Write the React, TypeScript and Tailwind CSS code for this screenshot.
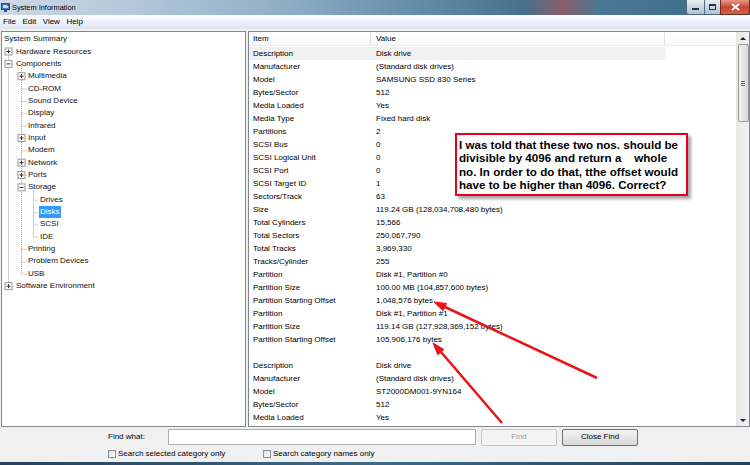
import React from "react";

const tree: { label: string; level: number; selected?: boolean }[] = [
  { label: "System Summary", level: 0 },
  { label: "Hardware Resources", level: 1 },
  { label: "Components", level: 1 },
  { label: "Multimedia", level: 2 },
  { label: "CD-ROM", level: 2 },
  { label: "Sound Device", level: 2 },
  { label: "Display", level: 2 },
  { label: "Infrared", level: 2 },
  { label: "Input", level: 2 },
  { label: "Modem", level: 2 },
  { label: "Network", level: 2 },
  { label: "Ports", level: 2 },
  { label: "Storage", level: 2 },
  { label: "Drives", level: 3 },
  { label: "Disks", level: 3, selected: true },
  { label: "SCSI", level: 3 },
  { label: "IDE", level: 3 },
  { label: "Printing", level: 2 },
  { label: "Problem Devices", level: 2 },
  { label: "USB", level: 2 },
  { label: "Software Environment", level: 1 },
];

const indent = ["pl-[2px]", "pl-[14px]", "pl-[26px]", "pl-[37px]"];

const rows: [string, string][] = [
  ["Description", "Disk drive"],
  ["Manufacturer", "(Standard disk drives)"],
  ["Model", "SAMSUNG SSD 830 Series"],
  ["Bytes/Sector", "512"],
  ["Media Loaded", "Yes"],
  ["Media Type", "Fixed hard disk"],
  ["Partitions", "2"],
  ["SCSI Bus", "0"],
  ["SCSI Logical Unit", "0"],
  ["SCSI Port", "0"],
  ["SCSI Target ID", "1"],
  ["Sectors/Track", "63"],
  ["Size", "119.24 GB (128,034,708,480 bytes)"],
  ["Total Cylinders", "15,566"],
  ["Total Sectors", "250,067,790"],
  ["Total Tracks", "3,969,330"],
  ["Tracks/Cylinder", "255"],
  ["Partition", "Disk #1, Partition #0"],
  ["Partition Size", "100.00 MB (104,857,600 bytes)"],
  ["Partition Starting Offset", "1,048,576 bytes"],
  ["Partition", "Disk #1, Partition #1"],
  ["Partition Size", "119.14 GB (127,928,369,152 bytes)"],
  ["Partition Starting Offset", "105,906,176 bytes"],
  ["", ""],
  ["Description", "Disk drive"],
  ["Manufacturer", "(Standard disk drives)"],
  ["Model", "ST2000DM001-9YN164"],
  ["Bytes/Sector", "512"],
  ["Media Loaded", "Yes"],
];

// row centre in page coords
const cy = (i: number) => 39.175 + 12.35 * i;

function Expander({ x, i, open }: { x: number; i: number; open?: boolean }) {
  const y = cy(i);
  return (
    <g>
      <rect x={x - 3.5} y={y - 3.5} width={7} height={7} fill="#fbfbfb" stroke="#9a9a9a" strokeWidth={1} />
      <line x1={x - 2} y1={y} x2={x + 2} y2={y} stroke="#333" strokeWidth={1} />
      {!open && <line x1={x} y1={y - 2} x2={x} y2={y + 2} stroke="#333" strokeWidth={1} />}
    </g>
  );
}

function TreeLines() {
  const dot = { stroke: "#a0a0a0", strokeWidth: 1, strokeDasharray: "1 1" };
  const l2 = [3, 4, 5, 6, 7, 8, 9, 10, 11, 12, 17, 18, 19];
  const l3 = [13, 14, 15, 16];
  return (
    <svg className="pointer-events-none absolute left-0 top-0" width={244} height={394}>
      <g transform="translate(-2,-32)">
        <line x1={8.5} y1={cy(1)} x2={8.5} y2={cy(20)} {...dot} />
        {[1, 2, 20].map((i) => (
          <line key={i} x1={8.5} y1={cy(i) + 0.5} x2={14} y2={cy(i) + 0.5} {...dot} />
        ))}
        <line x1={21.5} y1={cy(2)} x2={21.5} y2={cy(19)} {...dot} />
        {l2.map((i) => (
          <line key={i} x1={21.5} y1={cy(i) + 0.5} x2={27} y2={cy(i) + 0.5} {...dot} />
        ))}
        <line x1={33.5} y1={cy(12)} x2={33.5} y2={cy(16)} {...dot} />
        {l3.map((i) => (
          <line key={i} x1={33.5} y1={cy(i) + 0.5} x2={38} y2={cy(i) + 0.5} {...dot} />
        ))}
        <Expander x={8.5} i={1} />
        <Expander x={8.5} i={2} open />
        <Expander x={8.5} i={20} />
        <Expander x={21.5} i={3} />
        <Expander x={21.5} i={8} />
        <Expander x={21.5} i={10} />
        <Expander x={21.5} i={11} />
        <Expander x={21.5} i={12} open />
      </g>
    </svg>
  );
}

function Checkbox() {
  return <span className="mr-[2px] inline-block h-[8px] w-[8px] border border-[#8e8f8f] bg-gradient-to-br from-[#dcdcdc] to-white" />;
}

export default function App() {
  return (
    <div className="relative flex h-[465px] w-[750px] flex-col overflow-hidden bg-[#f0f0f0] font-['Liberation_Sans',Arial,sans-serif] text-[8px] leading-none text-black">
      {/* title bar */}
      <div className="relative flex h-[15px] shrink-0 items-center bg-[linear-gradient(90deg,#cdd9e6_0%,#b3c7da_18%,#8eaec6_38%,#5f88a4_58%,#46708d_70%,#8a5e6a_75%,#4b7894_80%,#3a6a86_100%)]">
        <svg width="9" height="9" viewBox="0 0 9 9" className="ml-[1px]">
          <rect x="0.5" y="0.5" width="8" height="6" fill="#3a7fd0" stroke="#1c4f8f" strokeWidth="1" />
          <rect x="2" y="2" width="5" height="3" fill="#bfe0ff" />
          <rect x="3" y="7" width="3" height="2" fill="#555" />
          <rect x="6" y="1" width="2" height="2" fill="#d33" />
        </svg>
        <span className="ml-[2px] text-[7.4px] text-black">System Information</span>
        <div className="ml-auto flex h-[15px] self-start">
          <div className="flex w-[19px] items-center justify-center rounded-bl-[3px] border border-t-0 border-[#50697f] bg-gradient-to-b from-[#e6eef5] to-[#aec3d6]">
            <span className="mt-[3px] h-[2px] w-[7px] bg-[#333]" />
          </div>
          <div className="flex w-[15px] items-center justify-center border-b border-[#50697f] bg-gradient-to-b from-[#e6eef5] to-[#aec3d6]">
            <span className="h-[6px] w-[7px] border border-t-2 border-[#333]" />
          </div>
          <div className="flex w-[30px] items-center justify-center rounded-br-[3px] border border-t-0 border-[#6b2a20] bg-gradient-to-b from-[#e59a8a] via-[#c8452f] to-[#d0634c]">
            <svg width="9" height="8" viewBox="0 0 9 8">
              <path d="M1 1 L8 7 M8 1 L1 7" stroke="#fff" strokeWidth="2" />
            </svg>
          </div>
        </div>
      </div>

      {/* menu bar */}
      <div className="flex h-[14px] shrink-0 items-center gap-[6.5px] bg-gradient-to-b from-[#fbfcfe] to-[#dde5f1] pl-[3px]">
        <span>File</span>
        <span>Edit</span>
        <span>View</span>
        <span>Help</span>
      </div>

      {/* panels */}
      <div className="flex h-[398px] shrink-0 gap-[2px] pl-[1px] pt-[2px]">
        <div className="relative h-[396px] w-[245px] border border-[#828790] bg-white">
          <TreeLines />
          <div className="relative pt-[1px]">
            {tree.map((t) => (
              <div key={t.label} className={`flex h-[12.35px] items-center text-[#111] ${indent[t.level]}`}>
                <span
                  className={
                    t.level === 3
                      ? t.selected
                        ? "bg-[#3399ff] px-[1px] py-[2px] text-white"
                        : "px-[1px]"
                      : ""
                  }
                >
                  {t.label}
                </span>
              </div>
            ))}
          </div>
        </div>

        <div className="flex h-[396px] flex-1 border border-[#828790] bg-white">
          <div className="flex-1 overflow-hidden">
            <div className="flex h-[14px] border-b border-[#eeeeee] bg-gradient-to-b from-white to-[#f7f8fa]">
              <div className="flex w-[122px] items-center border-r border-[#e3e3e3] pl-[4px]">Item</div>
              <div className="flex w-[294px] items-center border-r border-[#e3e3e3] pl-[5px]">Value</div>
              <div className="flex-1" />
            </div>
            <div className="pt-[1px]">
              {rows.map(([k, v], i) => (
                <div key={i} className="flex h-[13px] items-center">
                  <div className={`flex h-full w-[416px] items-center ${i === 0 ? "bg-[#f0f0f0]" : ""}`}>
                    <span className="w-[122px] pl-[4px]">{k}</span>
                    <span className="pl-[5px]">{v}</span>
                  </div>
                </div>
              ))}
            </div>
          </div>
          {/* scrollbar */}
          <div className="flex w-[13px] flex-col items-center border-l border-[#e6e6e6] bg-gradient-to-r from-[#e8e8e8] to-[#f3f3f3]">
            <div className="flex h-[12px] w-full items-center justify-center">
              <span className="h-0 w-0 border-x-[3px] border-b-[3px] border-x-transparent border-b-[#222]" />
            </div>
            <div className="flex h-[78px] w-[11px] flex-col items-center justify-center gap-[1px] rounded-[2px] border border-[#9a9a9a] bg-gradient-to-r from-[#f4f4f4] to-[#d6d6d6]">
              <span className="h-[1px] w-[4px] bg-[#666]" />
              <span className="h-[1px] w-[4px] bg-[#666]" />
              <span className="h-[1px] w-[4px] bg-[#666]" />
            </div>
            <div className="flex-1" />
            <div className="flex h-[12px] w-full items-center justify-center">
              <span className="h-0 w-0 border-x-[3px] border-t-[3px] border-x-transparent border-t-[#222]" />
            </div>
          </div>
        </div>
      </div>

      {/* find bar */}
      <div className="flex h-[35px] shrink-0 flex-col pl-[108px] pt-[1px]">
        <div className="flex h-[18px] items-center">
          <span className="w-[60px]">Find what:</span>
          <div className="h-[16px] w-[308px] border border-[#abadb3] bg-white" />
          <div className="ml-[5px] flex h-[17px] w-[76px] items-center justify-center rounded-[2px] border border-[#c6c6c6] bg-[#f4f4f4] text-[#a0a0a0]">
            Find
          </div>
          <div className="ml-[5px] flex h-[17px] w-[76px] items-center justify-center rounded-[2px] border border-[#707070] bg-gradient-to-b from-[#f3f3f3] to-[#d7d7d7]">
            Close Find
          </div>
        </div>
        <div className="mt-[4px] flex items-center">
          <div className="flex w-[155px] items-center">
            <Checkbox />
            <span>Search selected category only</span>
          </div>
          <div className="flex items-center">
            <Checkbox />
            <span>Search category names only</span>
          </div>
        </div>
      </div>
      <div className="h-[3px] shrink-0 bg-gradient-to-r from-[#24415c] via-[#3d6a8a] to-[#22405a]" />

      {/* callout */}
      <div className="absolute left-[455px] top-[133px] h-[63px] w-[233px] border-2 border-[#e3001b] bg-white pl-[2px] pt-[3px] font-['Liberation_Sans',Arial,sans-serif] text-[11.6px] font-bold leading-[13.3px] whitespace-pre text-black shadow-[3px_3px_3px_rgba(0,0,0,0.35)]">
        {"I was told that these two nos. should be\ndivisible by 4096 and return a    whole\nno. In order to do that, tthe offset would\nhave to be higher than 4096. Correct?"}
      </div>

      {/* arrows */}
      <svg className="pointer-events-none absolute left-0 top-0" width={750} height={465}>
        <g fill="#e81418" stroke="#e81418">
          <line x1={597} y1={378} x2={445} y2={307} strokeWidth={2.5} />
          <polygon points="434,302 446.6,303.4 443.2,310.7" strokeWidth={1} />
          <line x1={502} y1={423} x2={441} y2={352} strokeWidth={2.5} />
          <polygon points="433,343 443.9,349.5 437.8,354.7" strokeWidth={1} />
        </g>
      </svg>
    </div>
  );
}
